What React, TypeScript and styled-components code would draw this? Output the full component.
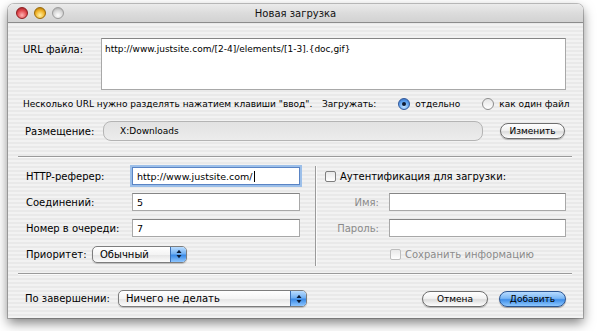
import React from "react";
import styled, { createGlobalStyle, css } from "styled-components";

const GlobalStyle = createGlobalStyle`
  html, body { margin: 0; padding: 0; background: #ffffff; }
  body { font-family: "DejaVu Sans", "Noto Sans", sans-serif; color: #000; }
`;

const Page = styled.div`
  width: 600px;
  height: 331px;
  padding: 4px 0 0 8px;
  box-sizing: border-box;
  overflow: hidden;
`;

const Window = styled.div`
  width: 575px;
  height: 314px;
  display: flex;
  flex-direction: column;
  border-radius: 6px 6px 0 0;
  box-shadow: 0 5px 12px rgba(0, 0, 0, 0.5), 0 0 0 1px rgba(0, 0, 0, 0.22);
  background: repeating-linear-gradient(
    to bottom,
    #f2f2f2 0px,
    #f2f2f2 2px,
    #e9e9e9 2px,
    #e9e9e9 4px
  );
  overflow: hidden;
`;

const TitleBar = styled.div`
  height: 18px;
  flex: none;
  display: grid;
  grid-template-columns: 1fr auto 1fr;
  align-items: center;
  padding: 0 8px;
  background: linear-gradient(to bottom, #ebebeb 0%, #dcdcdc 50%, #d2d2d2 100%);
  border-bottom: 1px solid #8c8c8c;
`;

const Lights = styled.div`
  display: flex;
  gap: 6px;
`;

const lightColors = {
  red: ["#ffb3b3", "#e0474c", "#8e1c1f"],
  yellow: ["#fff3a8", "#f0b024", "#9a6a08"],
  gray: ["#ffffff", "#d6d6d6", "#9b9b9b"],
};

const Light = styled.span<{ $c: keyof typeof lightColors }>`
  width: 12px;
  height: 12px;
  border-radius: 50%;
  box-sizing: border-box;
  ${({ $c }) => css`
    background: radial-gradient(circle at 50% 72%, ${lightColors[$c][0]} 0%, ${lightColors[$c][1]} 55%, ${lightColors[$c][2]} 100%);
    border: 1px solid ${lightColors[$c][2]};
  `}
`;

const Title = styled.div`
  font-size: 10px;
  color: #111;
`;

const Body = styled.div`
  flex: 1;
  padding: 15px 17px 0 15px;
  display: flex;
  flex-direction: column;
`;

const UrlRow = styled.div`
  display: grid;
  grid-template-columns: 78px 1fr;
`;

const Label = styled.div<{ $w?: number; $muted?: boolean }>`
  font-size: 10px;
  white-space: nowrap;
  box-sizing: border-box;
  ${({ $w }) => $w && `width: ${$w}px; flex: none;`}
  color: ${({ $muted }) => ($muted ? "#8a8a8a" : "#000")};
`;

const TopLabel = styled(Label)`
  padding-top: 6px;
`;

const PlaceLabel = styled(Label)`
  padding-left: 2px;
`;

const AuthLabel = styled(Label)`
  text-align: right;
  padding-right: 10px;
`;

const TextArea = styled.div`
  height: 52px;
  box-sizing: border-box;
  background: #fff;
  border: 1px solid #a8a8a8;
  border-top-color: #858585;
  padding: 5px 3px;
  font-size: 9px;
`;

const HintRow = styled.div`
  display: flex;
  align-items: center;
  height: 14px;
  margin-top: 7px;
  font-size: 9px;
  white-space: nowrap;
`;

const Hint = styled.span`
  width: 299px;
  flex: none;
`;

const RadioItem = styled.label<{ $gap?: number }>`
  display: flex;
  align-items: center;
  gap: 5px;
  white-space: nowrap;
  margin-left: ${({ $gap }) => $gap ?? 0}px;
`;

const Radio = styled.span<{ $on?: boolean }>`
  width: 12px;
  height: 12px;
  border-radius: 50%;
  box-sizing: border-box;
  display: flex;
  align-items: center;
  justify-content: center;
  flex: none;
  ${({ $on }) =>
    $on
      ? css`
          background: radial-gradient(circle at 50% 75%, #c4e2ff 0%, #5fa2ee 55%, #2d63b8 100%);
          border: 1px solid #30579a;
          &::after {
            content: "";
            width: 4px;
            height: 4px;
            border-radius: 50%;
            background: #0e1a33;
          }
        `
      : css`
          background: linear-gradient(to bottom, #e6e6e6, #ffffff);
          border: 1px solid #8d8d8d;
        `}
`;

const PlaceRow = styled.div`
  display: flex;
  align-items: center;
  margin-top: 10px;
`;

const PathField = styled.div`
  width: 380px;
  height: 20px;
  box-sizing: border-box;
  border: 1px solid #b4b4b4;
  border-radius: 8px;
  background: linear-gradient(to bottom, #e2e2e2, #ececec);
  display: flex;
  align-items: center;
  padding-left: 16px;
  font-size: 9px;
`;

const PillButton = styled.div<{ $w: number; $default?: boolean }>`
  width: ${({ $w }) => $w}px;
  height: 16px;
  box-sizing: border-box;
  border-radius: 8px;
  display: flex;
  align-items: center;
  justify-content: center;
  font-size: 9px;
  ${({ $default }) =>
    $default
      ? css`
          border: 1px solid #2b5592;
          background: linear-gradient(to bottom, #b7dbff 0%, #7bb7f5 45%, #3f8ee9 55%, #8ec8ff 100%);
          box-shadow: 0 1px 1px rgba(0, 0, 0, 0.35);
        `
      : css`
          border: 1px solid #6e6e6e;
          background: linear-gradient(to bottom, #ffffff 0%, #f2f2f2 45%, #dcdcdc 55%, #ffffff 100%);
          box-shadow: 0 1px 1px rgba(0, 0, 0, 0.25);
        `}
`;

const ChangeButton = styled(PillButton)`
  margin-left: auto;
  margin-right: 1px;
`;

const HSep = styled.div<{ $top: number }>`
  height: 1px;
  background: #9a9a9a;
  box-shadow: 0 1px 0 #fbfbfb;
  margin: ${({ $top }) => $top}px -6px 0 -5px;
`;

const Middle = styled.div`
  display: flex;
  height: 116px;
`;

const Column = styled.div<{ $pl: number }>`
  padding: 10px 0 0 ${({ $pl }) => $pl}px;
  box-sizing: border-box;
  display: flex;
  flex-direction: column;
  gap: 8px;
`;

const LeftColumn = styled(Column)`
  width: 292px;
  flex: none;
`;

const RightColumn = styled(Column)`
  flex: 1;
`;

const VSep = styled.div`
  width: 1px;
  margin: 9px 0 7px;
  background: #9a9a9a;
  box-shadow: 1px 0 0 #fbfbfb;
`;

const FieldRow = styled.div`
  display: flex;
  align-items: center;
  height: 18px;
`;

const TextField = styled.div<{ $w: number; $focus?: boolean }>`
  width: ${({ $w }) => $w}px;
  height: 18px;
  box-sizing: border-box;
  background: #fff;
  border: 1px solid #a8a8a8;
  border-top-color: #858585;
  font-size: 9.5px;
  display: flex;
  align-items: center;
  padding-left: 4px;
  ${({ $focus }) =>
    $focus &&
    css`
      border-color: #5a84c4;
      box-shadow: 0 0 0 2px #9cbfe9;
    `}
`;

const Caret = styled.span`
  display: inline-block;
  width: 1px;
  height: 11px;
  background: #000;
  margin-left: 1px;
`;

const Popup = styled.div<{ $w: number }>`
  width: ${({ $w }) => $w}px;
  height: 17px;
  box-sizing: border-box;
  border: 1px solid #7d7d7d;
  border-radius: 5px;
  background: linear-gradient(to bottom, #ffffff 0%, #f4f4f4 50%, #e4e4e4 51%, #fbfbfb 100%);
  box-shadow: 0 1px 1px rgba(0, 0, 0, 0.2);
  display: flex;
  align-items: center;
  overflow: hidden;
  font-size: 10px;
`;

const PopupText = styled.span`
  flex: 1;
  padding-left: 7px;
`;

const PopupArrows = styled.span`
  width: 15px;
  align-self: stretch;
  border-left: 1px solid #3a6fb5;
  background: linear-gradient(to bottom, #b9dcff 0%, #72b0f2 45%, #3a8ae6 55%, #8ec6ff 100%);
  display: flex;
  align-items: center;
  justify-content: center;
`;

const Check = styled.span<{ $muted?: boolean }>`
  width: 11px;
  height: 11px;
  box-sizing: border-box;
  border-radius: 2px;
  border: 1px solid ${({ $muted }) => ($muted ? "#bdbdbd" : "#7e7e7e")};
  background: linear-gradient(to bottom, #e8e8e8, #ffffff);
  flex: none;
`;

const CheckRow = styled.div<{ $pl?: number; $muted?: boolean }>`
  display: flex;
  align-items: center;
  gap: 4px;
  height: 18px;
  padding-left: ${({ $pl }) => $pl ?? 0}px;
  font-size: 10px;
  color: ${({ $muted }) => ($muted ? "#8a8a8a" : "#000")};
`;

const Footer = styled.div`
  display: flex;
  align-items: center;
  margin-top: 16px;
  padding-left: 2px;
`;

const FooterButtons = styled.div`
  margin-left: auto;
  display: flex;
  gap: 11px;
`;

function Arrows() {
  return (
    <svg width="6" height="10" viewBox="0 0 6 10">
      <path d="M0.5 4 L3 0.8 L5.5 4 Z" fill="#0c1c36" />
      <path d="M0.5 6 L3 9.2 L5.5 6 Z" fill="#0c1c36" />
    </svg>
  );
}

export default function App() {
  return (
    <Page>
      <GlobalStyle />
      <Window>
        <TitleBar>
          <Lights>
            <Light $c="red" />
            <Light $c="yellow" />
            <Light $c="gray" />
          </Lights>
          <Title>Новая загрузка</Title>
          <span />
        </TitleBar>
        <Body>
          <UrlRow>
            <TopLabel>URL файла:</TopLabel>
            <TextArea>http://www.justsite.com/[2-4]/elements/[1-3].{"{doc,gif}"}</TextArea>
          </UrlRow>
          <HintRow>
            <Hint>Несколько URL нужно разделять нажатием клавиши "ввод".</Hint>
            <span>Загружать:</span>
            <RadioItem $gap={22}>
              <Radio $on />
              <span>отдельно</span>
            </RadioItem>
            <RadioItem $gap={22}>
              <Radio />
              <span>как один файл</span>
            </RadioItem>
          </HintRow>
          <PlaceRow>
            <PlaceLabel $w={80}>Размещение:</PlaceLabel>
            <PathField>X:Downloads</PathField>
            <ChangeButton $w={65}>Изменить</ChangeButton>
          </PlaceRow>
          <HSep $top={15} />
          <Middle>
            <LeftColumn $pl={3}>
              <FieldRow>
                <Label $w={106}>HTTP-реферер:</Label>
                <TextField $w={168} $focus>
                  http://www.justsite.com/<Caret />
                </TextField>
              </FieldRow>
              <FieldRow>
                <Label $w={106}>Соединений:</Label>
                <TextField $w={168}>5</TextField>
              </FieldRow>
              <FieldRow>
                <Label $w={106}>Номер в очереди:</Label>
                <TextField $w={168}>7</TextField>
              </FieldRow>
              <FieldRow>
                <Label $w={66}>Приоритет:</Label>
                <Popup $w={95}>
                  <PopupText>Обычный</PopupText>
                  <PopupArrows>
                    <Arrows />
                  </PopupArrows>
                </Popup>
              </FieldRow>
            </LeftColumn>
            <VSep />
            <RightColumn $pl={9}>
              <CheckRow>
                <Check />
                <span>Аутентификация для загрузки:</span>
              </CheckRow>
              <FieldRow>
                <AuthLabel $w={64} $muted>Имя:</AuthLabel>
                <TextField $w={177} />
              </FieldRow>
              <FieldRow>
                <AuthLabel $w={64} $muted>Пароль:</AuthLabel>
                <TextField $w={177} />
              </FieldRow>
              <CheckRow $pl={65} $muted>
                <Check $muted />
                <span>Сохранить информацию</span>
              </CheckRow>
            </RightColumn>
          </Middle>
          <HSep $top={0} />
          <Footer>
            <Label $w={93}>По завершении:</Label>
            <Popup $w={189}>
              <PopupText>Ничего не делать</PopupText>
              <PopupArrows>
                <Arrows />
              </PopupArrows>
            </Popup>
            <FooterButtons>
              <PillButton $w={66}>Отмена</PillButton>
              <PillButton $w={67} $default>
                Добавить
              </PillButton>
            </FooterButtons>
          </Footer>
        </Body>
      </Window>
    </Page>
  );
}
